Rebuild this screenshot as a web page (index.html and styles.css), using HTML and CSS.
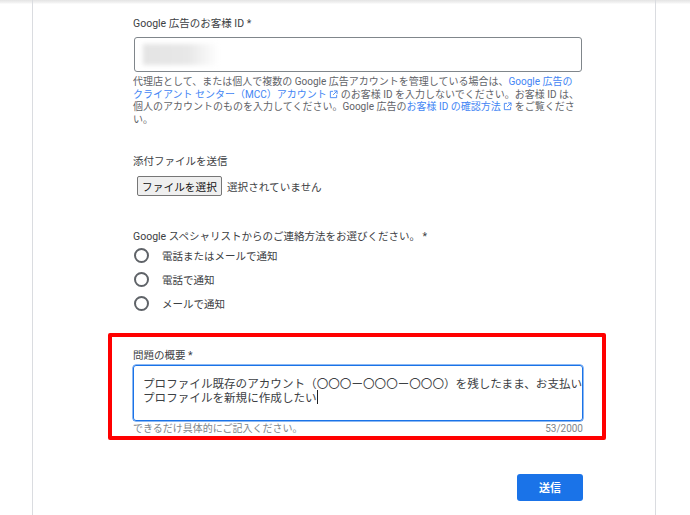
FILE: index.html
```html
<!DOCTYPE html>
<html lang="ja">
<head>
<meta charset="utf-8">
<title>お問い合わせ</title>
<link rel="stylesheet" href="styles.css">
</head>
<body>
<div class="page">
  <main class="card">
    <section class="field-id">
      <div class="label">Google 広告のお客様 ID *</div>
      <div class="input"><div class="blur"></div></div>
      <p class="help">代理店として、または個人で複数の Google 広告アカウントを管理している場合は、<a href="#">Google 広告の<br>クライアント センター（MCC）アカウント <svg class="ext" viewBox="0 0 10 10"><path d="M1.5 1.5h3M1.5 1.5v7h7v-3M5.5 1h3.5v3.5M9 1L4.5 5.5" fill="none" stroke="currentColor" stroke-width="1"/></svg></a> のお客様 ID を入力しないでください。お客様 ID は、<br>個人のアカウントのものを入力してください。Google 広告の<a href="#">お客様 ID の確認方法 <svg class="ext" viewBox="0 0 10 10"><path d="M1.5 1.5h3M1.5 1.5v7h7v-3M5.5 1h3.5v3.5M9 1L4.5 5.5" fill="none" stroke="currentColor" stroke-width="1"/></svg></a> をご覧くださ<br>い。</p>
    </section>
    <section class="field-file">
      <div class="label">添付ファイルを送信</div>
      <div class="file-row"><button class="file-btn" type="button">ファイルを選択</button><span class="file-none">選択されていません</span></div>
    </section>
    <section class="field-radio">
      <div class="label radio-title">Google スペシャリストからのご連絡方法をお選びください。 *</div>
      <div class="radio"><span class="dot"></span><span>電話またはメールで通知</span></div>
      <div class="radio"><span class="dot"></span><span>電話で通知</span></div>
      <div class="radio"><span class="dot"></span><span>メールで通知</span></div>
    </section>
    <section class="field-summary">
      <div class="label">問題の概要 *</div>
      <div class="textarea"><div class="line">プロファイル既存のアカウント（〇〇〇ー〇〇〇ー〇〇〇）を残したまま、お支払い</div><div class="line">プロファイルを新規に作成したい<span class="caret"></span></div></div>
      <div class="hint"><span>できるだけ具体的にご記入ください。</span><span>53/2000</span></div>
    </section>
    <div class="actions"><button class="submit" type="button">送信</button></div>
  </main>
  <div class="highlight"></div>
</div>
</body>
</html>
```
FILE: styles.css
```css
* { box-sizing: border-box; }
html, body { margin: 0; padding: 0; background: #fff; }
body { font-family: Roboto, "Noto Sans CJK JP", sans-serif; color: #3c4043; }
.page {
  position: relative;
  width: 690px;
  height: 515px;
  overflow: hidden;
  background: linear-gradient(#e4e4e4 0, #f4f4f4 3px, #fff 4px);
}
.card {
  width: 624px;
  height: 515px;
  margin-left: 32px;
  padding: 16px 72px 0 100px;
  border-left: 1px solid #dadce0;
  border-right: 1px solid #dadce0;
}
.label { font-size: 10.5px; line-height: 15px; color: #3c4043; }
.input {
  height: 35px;
  margin: 6px 1px 0;
  padding: 6px 8px;
  border: 1px solid #80868b;
  border-radius: 3px;
}
.blur {
  width: 76px;
  height: 21px;
  background: linear-gradient(90deg, #e4e4e4, #e8e8e8 60%, #fff);
  filter: blur(2px);
}
.help {
  margin: 4px 0 0;
  font-size: 10px;
  line-height: 12.6px;
  color: #5f6368;
  white-space: nowrap;
}
.help a { color: #4285f4; text-decoration: none; }
.ext { width: 9px; height: 9px; vertical-align: -1px; }
.field-file { margin-top: 28px; }
.file-row { display: flex; align-items: center; margin: 7px 0 0 4px; }
.file-btn {
  width: 85px;
  height: 20px;
  padding: 0;
  white-space: nowrap;
  font: 10.7px "Noto Sans CJK JP", sans-serif;
  color: #111;
  background: #efefef;
  border: 1px solid #767676;
  border-radius: 2px;
}
.file-none { margin-left: 5px; font-size: 10.6px; color: #3c4043; }
.field-radio { margin-top: 33px; }
.radio-title { margin-bottom: -1px; }
.radio {
  display: flex;
  align-items: center;
  height: 24px;
  font-size: 10.5px;
  color: #3c4043;
}
.dot {
  width: 15px;
  height: 15px;
  margin: 0 13px 0 1px;
  border: 2px solid #5f6368;
  border-radius: 50%;
}
.field-summary { margin-top: 33px; }
.textarea {
  height: 56px;
  margin-top: 2px;
  padding: 9px 9px 0;
  border: 1px solid #1a73e8;
  box-shadow: 0 0 0 0.5px #1a73e8;
  border-radius: 3px;
  font-size: 11.58px;
  color: #3c4043;
  white-space: nowrap;
}
.line { display: flex; align-items: center; height: 14.5px; }
.caret { width: 1px; height: 14px; background: #202124; }
.hint {
  display: flex;
  justify-content: space-between;
  margin-top: 1px;
  font-size: 10px;
  line-height: 13px;
  color: #80868b;
}
.actions { display: flex; justify-content: flex-end; margin-top: 39px; }
.submit {
  width: 66px;
  height: 27px;
  padding: 0 0 2px;
  border: 0;
  border-radius: 3px;
  background: #1a73e8;
  color: #fff;
  font: 700 11px "Noto Sans CJK JP", sans-serif;
}
.highlight {
  position: absolute;
  left: 108px;
  top: 333px;
  width: 498px;
  height: 107px;
  border: 4px solid #f00;
  border-radius: 2px;
}
```
